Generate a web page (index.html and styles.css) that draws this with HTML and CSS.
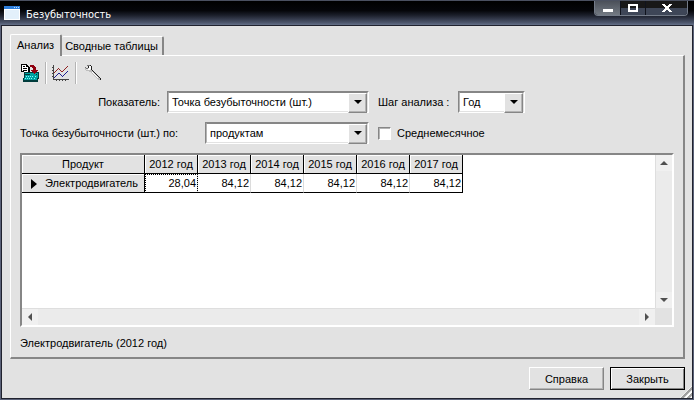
FILE: index.html
```
<!DOCTYPE html>
<html lang="ru">
<head>
    <meta charset="UTF-8">
    <meta name="viewport" content="width=device-width, initial-scale=1.0">
    <title>Безубыточность</title>
    <link rel="stylesheet" href="styles.css">
</head>
<body>
    <div class="window">
        <header class="titlebar">
            <svg class="app-icon" width="16" height="14" viewBox="0 0 16 14" shape-rendering="crispEdges">
                <path fill="#fff" d="M0 0h16v14H0z"/>
                <path fill="#2f7fdc" d="M0 0h16v3H0z"/>
                <path fill="#b9dcff" d="M10 1h1v1h-1zM12 1h1v1h-1zM14 1h1v1h-1z"/>
                <path fill="#e3f0fb" d="M1 4h14v9H1z"/>
            </svg>
            <h1 class="title">Безубыточность</h1>
            <div class="window-buttons">
                <button class="win-btn win-min" type="button" aria-label="Свернуть">
                    <svg width="10" height="10" viewBox="0 0 10 10" shape-rendering="crispEdges"><path fill="#fff" d="M0 6h10v3H0z"/></svg>
                </button>
                <button class="win-btn" type="button" aria-label="Развернуть">
                    <svg width="10" height="10" viewBox="0 0 10 10" shape-rendering="crispEdges"><path fill="#fff" fill-rule="evenodd" d="M0 1h10v8H0zM2 3v4h6V3z"/></svg>
                </button>
                <button class="win-btn win-close" type="button" aria-label="Закрыть окно">
                    <svg width="10" height="10" viewBox="0 0 10 10" shape-rendering="crispEdges"><path fill="#fff" d="M0 1h3v1h1v1h2V2h1V1h3v1H9v1H8v1H7v2h1v1h1v1h1v1H7V8H6V7H4v1H3v1H0V8h1V7h1V6h1V4H2V3H1V2H0z"/></svg>
                </button>
            </div>
        </header>

        <main class="client">
            <div class="tabs" role="tablist">
                <button class="tab tab-active" type="button" role="tab" aria-selected="true">Анализ</button>
                <button class="tab" type="button" role="tab" aria-selected="false">Сводные таблицы</button>
            </div>

            <section class="panel">
                <div class="toolbar">
                    <button class="tool" type="button" aria-label="Рассчитать">
                        <svg width="20" height="20" viewBox="0 0 20 20" shape-rendering="crispEdges">
                            <path fill="#000" d="M1 1h6v1h1v1h1v1h1v7H4V9H1z"/>
                            <path fill="#fff" d="M2 2h4v2h2v5H4V8H2z"/>
                            <path fill="#000" d="M3 3h2v1H3zM3 5h4v1H3zM3 7h4v1H3z"/>
                            <path fill="#003c3c" d="M4 9h15v7h-1v3H3v-4h1z"/>
                            <path fill="#00a0a0" d="M5 10h13v5h-1v2H4v-2h1z"/>
                            <path fill="#003c3c" d="M5 11h5v1H5zM16 11h1v1h-1z"/>
                            <path fill="#7ff" d="M6 13h1v1H6zM8 13h1v1H8zM10 13h1v1h-1zM12 13h1v1h-1zM15 13h1v1h-1zM5 15h1v1H5zM7 15h1v1H7zM9 15h1v1H9zM11 15h1v1h-1zM14 15h1v1h-1z"/>
                            <path fill="#900010" d="M10 2h4v1h1v1h1v3h2v1h-1v1h-1v1h-1v1h-1v-1h-1V9h-1V8h-1V7h2V5h-1V4h-2z"/>
                        </svg>
                    </button>
                    <button class="tool" type="button" aria-label="График">
                        <svg width="18" height="18" viewBox="0 0 18 18" shape-rendering="crispEdges">
                            <path fill="#444" d="M1 1h1v14h15v1H1zM0 3h1v1H0zM0 6h1v1H0zM0 9h1v1H0zM0 12h1v1H0zM4 16h1v1H4zM7 16h1v1H7zM10 16h1v1h-1zM13 16h1v1h-1z"/>
                            <path fill="#902020" d="M2 8h1v1H2zM3 7h1v1H3zM4 6h1v1H4zM5 5h1v1H5zM6 4h1v1H6zM7 5h1v1H7zM8 6h1v1H8zM9 7h1v1H9zM10 7h1v1h-1zM11 6h1v1h-1zM12 5h1v1h-1zM13 4h1v1h-1zM14 3h1v1h-1zM15 2h1v1h-1z"/>
                            <path fill="#202090" d="M2 13h1v1H2zM3 12h1v1H3zM4 11h1v1H4zM5 10h1v1H5zM6 9h1v1H6zM7 9h1v1H7zM8 10h1v1H8zM9 11h1v1H9zM10 12h1v1h-1zM11 11h1v1h-1zM12 10h1v1h-1zM13 9h1v1h-1zM14 8h1v1h-1zM15 7h1v1h-1z"/>
                        </svg>
                    </button>
                    <button class="tool" type="button" aria-label="Настройка">
                        <svg width="18" height="18" viewBox="0 0 18 18" shape-rendering="crispEdges">
                            <path fill="#bdbdbd" d="M5 6h4v1h1v1h1v1h1v1h1v1h1v1h1v1h1v3h-2v-1h-1v-1h-1v-1h-1v-1h-1v-1H9v-1H8V9H7V8H5zM1 4h1v2h3v1H2V6H1z"/>
                            <path fill="#fff" d="M5 2h2v3H6v1H4V5h1zM8 8h1v1h1v1h1v1h1v1h1v1h1v1h-1v-1h-1v-1h-1v-1h-1v-1H9V9H8z"/>
                            <path fill="#777" d="M1 3h1v1h2v1H2V4H1zM3 1h3v1H3z"/>
                            <path fill="#222" d="M6 1h1v1h1v4H7V2H6zM4 2h1v2H4zM8 6h1v1H8zM9 7h1v1H9zM10 8h1v1h-1zM11 9h1v1h-1zM12 10h1v1h-1zM13 11h1v1h-1zM14 12h1v1h-1zM15 13h1v1h-1zM16 14h1v2h-1z"/>
                        </svg>
                    </button>
                </div>

                <div class="filters">
                    <div class="filter-row">
                        <label class="filter-label filter-label-first" for="indicator">Показатель:</label>
                        <span class="combo combo-wide">
                            <select id="indicator"><option>Точка безубыточности (шт.)</option></select>
                        </span>
                        <label class="filter-label filter-label-step" for="step">Шаг анализа :</label>
                        <span class="combo combo-small">
                            <select id="step"><option>Год</option></select>
                        </span>
                    </div>
                    <div class="filter-row">
                        <label class="filter-label filter-label-second" for="group">Точка безубыточности (шт.) по:</label>
                        <span class="combo combo-medium">
                            <select id="group"><option>продуктам</option></select>
                        </span>
                        <label class="check"><input type="checkbox">Среднемесячное</label>
                    </div>
                </div>

                <div class="grid-box">
                    <div class="grid-view">
                        <table class="grid">
                            <thead>
                                <tr>
                                    <th class="product">Продукт</th>
                                    <th>2012 год</th>
                                    <th>2013 год</th>
                                    <th>2014 год</th>
                                    <th>2015 год</th>
                                    <th>2016 год</th>
                                    <th>2017 год</th>
                                </tr>
                            </thead>
                            <tbody>
                                <tr>
                                    <th class="product row-head" scope="row">Электродвигатель</th>
                                    <td class="focused">28,04</td>
                                    <td>84,12</td>
                                    <td>84,12</td>
                                    <td>84,12</td>
                                    <td>84,12</td>
                                    <td>84,12</td>
                                </tr>
                            </tbody>
                        </table>
                    </div>
                    <div class="scroll scroll-v">
                        <button class="scroll-btn" type="button" aria-label="Вверх"><span class="arrow arrow-up"></span></button>
                        <button class="scroll-btn" type="button" aria-label="Вниз"><span class="arrow arrow-down"></span></button>
                    </div>
                    <div class="scroll scroll-h">
                        <button class="scroll-btn" type="button" aria-label="Влево"><span class="arrow arrow-left"></span></button>
                        <button class="scroll-btn" type="button" aria-label="Вправо"><span class="arrow arrow-right"></span></button>
                    </div>
                </div>

                <p class="status">Электродвигатель (2012 год)</p>
            </section>

            <footer class="actions">
                <button class="btn" type="button">Справка</button>
                <button class="btn btn-default" type="button">Закрыть</button>
            </footer>
        </main>
        <span class="size-grip"></span>
    </div>
</body>
</html>
```
FILE: styles.css
```
:root {
    --face: #e2e2e2;
    --light: #ffffff;
    --shadow: #868686;
    --soft-shadow: #b4b4b4;
    --frame: #20222e;
}

* {
    box-sizing: border-box;
}

body {
    margin: 0;
    font-family: "Liberation Sans", Arial, sans-serif;
    font-size: 11px;
    line-height: 14px;
    color: #000;
}

button, select, input {
    font: inherit;
    color: inherit;
    margin: 0;
}

button {
    padding: 0;
    border: none;
    background: none;
}

.window {
    position: relative;
    display: flex;
    flex-direction: column;
    min-height: 100vh;
    padding: 0 1px 1px 1px;
    background-color: #5a6178;
}

/* Title bar */
.titlebar {
    display: flex;
    align-items: center;
    height: 25px;
    margin: 0 -1px;
    padding-left: 4px;
    border-top: 1px solid #4a5060;
    background: linear-gradient(#000 0, #05060a 40%, #1c202c 60%, #4c556b 90%, #647088 100%);
}

.title {
    flex: 1;
    margin: 0;
    padding: 4px 0 0 6px;
    font-family: "DejaVu Sans Condensed", "Noto Sans", sans-serif;
    font-size: 11px;
    font-weight: normal;
    color: #fff;
}

.window-buttons {
    display: flex;
    align-self: flex-start;
    margin-right: 6px;
    border: 1px solid #737b88;
    border-top: none;
    border-radius: 0 0 4px 4px;
    overflow: hidden;
}

.win-btn {
    display: flex;
    align-items: center;
    justify-content: center;
    width: 25px;
    height: 14px;
    border-left: 1px solid #10131c;
    background: linear-gradient(#181818 50%, #3e4657 50%);
}

.win-min {
    border-left: none;
    background: linear-gradient(#4b5059, #737a83);
}

.win-close {
    width: 42px;
}

/* Client area */
.client {
    display: flex;
    flex-direction: column;
    flex: 1;
    padding: 8px 7px 8px 8px;
    border: 1px solid var(--frame);
    background-color: var(--face);
}

.tabs {
    display: flex;
    align-items: flex-end;
    height: 21px;
}

.tab {
    height: 19px;
    padding: 0 4px 0 3px;
    border-top: 1px solid var(--light);
    border-right: 2px solid var(--shadow);
    border-radius: 2px 2px 0 0;
    white-space: nowrap;
}

.tab-active {
    z-index: 1;
    height: 22px;
    margin-bottom: -1px;
    padding: 0 6px 1px 6px;
    border-left: 1px solid var(--light);
    background-color: var(--face);
}

.panel {
    display: flex;
    flex-direction: column;
    flex: 1;
    padding: 6px 9px 7px 9px;
    border: 1px solid var(--light);
    border-right: 2px solid var(--shadow);
    border-bottom: 2px solid var(--shadow);
}

/* Toolbar */
.toolbar {
    display: flex;
    height: 22px;
}

.tool {
    display: flex;
    align-items: center;
    justify-content: center;
    width: 30px;
}

.tool:first-child {
    width: 25px;
    justify-content: flex-start;
}

.tool + .tool {
    border-left: 1px solid var(--soft-shadow);
    box-shadow: inset 1px 0 var(--light);
}

.tool:last-child {
    width: 34px;
}

/* Filters */
.filters {
    display: flex;
    flex-direction: column;
    gap: 9px;
    padding: 7px 0 9px;
}

.filter-row {
    display: flex;
    align-items: center;
    height: 22px;
}

.filter-label {
    white-space: nowrap;
}

.filter-label-first {
    width: 147px;
    padding-right: 7px;
    text-align: right;
}

.filter-label-second {
    width: 185px;
}

.filter-label-step {
    width: 89px;
    padding-left: 9px;
}

.combo {
    position: relative;
    height: 22px;
    border: 1px solid;
    border-color: var(--shadow) var(--light) var(--light) var(--shadow);
}

.combo-wide {
    width: 202px;
}

.combo-medium {
    width: 164px;
}

.combo-small {
    width: 67px;
}

.combo select {
    display: block;
    width: 100%;
    height: 20px;
    padding: 0 18px 1px 3px;
    border: 1px solid;
    border-color: var(--shadow) var(--face) var(--face) var(--soft-shadow);
    border-radius: 0;
    background-color: #fff;
    appearance: none;
}

.combo::before {
    content: "";
    position: absolute;
    top: 1px;
    right: 1px;
    width: 17px;
    height: 18px;
    border: 1px solid;
    border-color: var(--light) var(--shadow) var(--shadow) var(--light);
    background-color: var(--face);
    box-shadow: inset -1px -1px var(--soft-shadow);
    pointer-events: none;
}

.combo::after {
    content: "";
    position: absolute;
    top: 8px;
    right: 6px;
    border: 4px solid transparent;
    border-top-color: #000;
    border-bottom: none;
    pointer-events: none;
}

.check {
    display: flex;
    align-items: center;
    gap: 6px;
    padding-left: 9px;
}

.check input {
    width: 13px;
    height: 13px;
    border: 1px solid;
    border-color: var(--shadow) var(--light) var(--light) var(--shadow);
    background-color: #fff;
    box-shadow: inset 1px 1px var(--soft-shadow);
    appearance: none;
}

/* Data grid */
.grid-box {
    display: grid;
    grid-template: 1fr 17px / 1fr 17px;
    flex: 1;
    border: 2px solid;
    border-color: var(--shadow) var(--light) var(--light) var(--shadow);
}

.grid-view {
    overflow: hidden;
    background-color: #fff;
}

.grid {
    border-collapse: separate;
    border-spacing: 0;
    table-layout: fixed;
    width: 441px;
}

.grid th, .grid td {
    width: 53px;
    height: 19px;
    padding: 0 1px;
    border-right: 1px solid #000;
    border-bottom: 1px solid #000;
    font-weight: normal;
    line-height: 16px;
    white-space: nowrap;
}

.grid th {
    background-color: var(--face);
    box-shadow: inset 1px 1px var(--light);
}

.grid .product {
    width: 123px;
}

.grid .row-head {
    padding-right: 6px;
    text-align: right;
}

.row-head::before {
    content: "";
    float: left;
    margin: 4px 0 0 8px;
    border: 5px solid transparent;
    border-left: 6px solid #000;
    border-right: none;
}

.grid td {
    border-right-color: #dcdcdc;
    text-align: right;
}

.grid td:last-child {
    border-right-color: #000;
}

.grid .focused {
    outline: 1px dotted #000;
    outline-offset: -1px;
}

/* Scroll bars */
.scroll {
    display: flex;
    justify-content: space-between;
    background-color: #ebebeb;
}

.scroll-v {
    flex-direction: column;
    border-left: 1px solid #dedede;
}

.scroll-h {
    border-top: 1px solid #dedede;
}

.scroll-btn {
    display: flex;
    align-items: center;
    justify-content: center;
    width: 16px;
    height: 16px;
    background-color: #f0f0f0;
}

.arrow {
    border: 4px solid transparent;
}

.arrow-up {
    border-bottom-color: #505050;
    border-top: none;
}

.arrow-down {
    border-top-color: #505050;
    border-bottom: none;
}

.arrow-left {
    border-right-color: #505050;
    border-left: none;
}

.arrow-right {
    border-left-color: #505050;
    border-right: none;
}

.status {
    margin: 9px 0 0;
}

/* Bottom buttons */
.actions {
    display: flex;
    justify-content: flex-end;
    gap: 6px;
    padding-top: 8px;
}

.btn {
    width: 75px;
    height: 23px;
    border: 1px solid;
    border-color: var(--light) var(--shadow) var(--shadow) var(--light);
    box-shadow: inset -1px -1px var(--soft-shadow);
}

.btn-default {
    border-color: #000;
    box-shadow: inset 1px 1px var(--light), inset -1px -1px var(--shadow);
}

.size-grip {
    position: absolute;
    right: 2px;
    bottom: 2px;
    width: 12px;
    height: 12px;
    background: repeating-linear-gradient(135deg, #fff 0 1px, #a0a0a0 1px 3px, #e2e2e2 3px 4px);
    clip-path: polygon(100% 0, 100% 100%, 0 100%);
}
```
